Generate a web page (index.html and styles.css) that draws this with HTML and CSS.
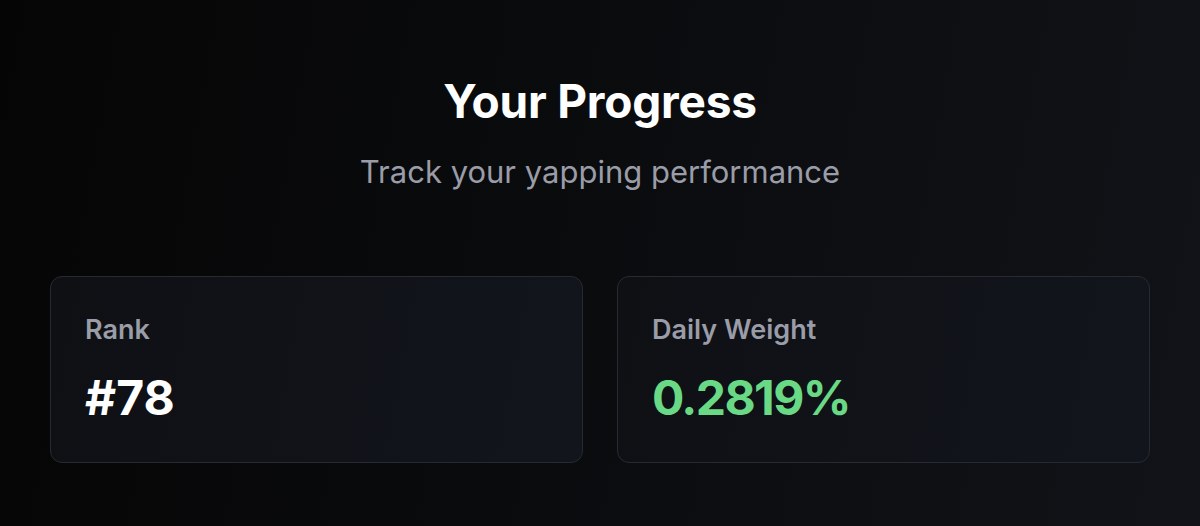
FILE: index.html
```html
<!DOCTYPE html>
<html lang="en">
<head>
  <meta charset="UTF-8">
  <title>Your Progress</title>
  <link rel="stylesheet" href="styles.css">
</head>
<body>

  <section class="progress">
    <h2 class="progress-title">Your Progress</h2>
    <p class="progress-sub">Track your yapping performance</p>

    <div class="stats">
      <div class="stat-card">
        <div class="stat-label">Rank</div>
        <div class="stat-value">#78</div>
      </div>
      <div class="stat-card">
        <div class="stat-label">Daily Weight</div>
        <div class="stat-value green">0.2819%</div>
      </div>
    </div>
  </section>

</body>
</html>
```

FILE: styles.css
```css
html, body {
  height: 100%;
}
body {
  margin: 0;
  font-family: Inter, "Noto Sans", sans-serif;
  background: linear-gradient(100deg, #050505 0%, #0a0b0d 45%, #111318 100%);
  color: #fff;
}
.progress {
  max-width: 1100px;
  margin: 0 auto;
  padding-top: 75px;
  text-align: center;
}
.progress-title {
  margin: 0;
  font-size: 46px;
  font-weight: 700;
  line-height: 52px;
  letter-spacing: -0.2px;
}
.progress-sub {
  margin: 26px 0 0;
  font-size: 31px;
  line-height: 38px;
  color: #9a9ca8;
}
.stats {
  display: grid;
  grid-template-columns: 1fr 1fr;
  gap: 34px;
  margin-top: 85px;
  text-align: left;
}
.stat-card {
  height: 187px;
  box-sizing: border-box;
  padding: 36px 34px;
  border: 1px solid #262a33;
  border-radius: 12px;
  background: linear-gradient(100deg, #0e1014 0%, #12151c 100%);
}
.stat-label {
  font-size: 27px;
  line-height: 34px;
  font-weight: 600;
  color: #9a9ca8;
}
.stat-value {
  margin-top: 23px;
  font-size: 48px;
  line-height: 56px;
  font-weight: 700;
  color: #fff;
}
.stat-value.green {
  color: #6ad985;
  letter-spacing: -1.6px;
}
```
